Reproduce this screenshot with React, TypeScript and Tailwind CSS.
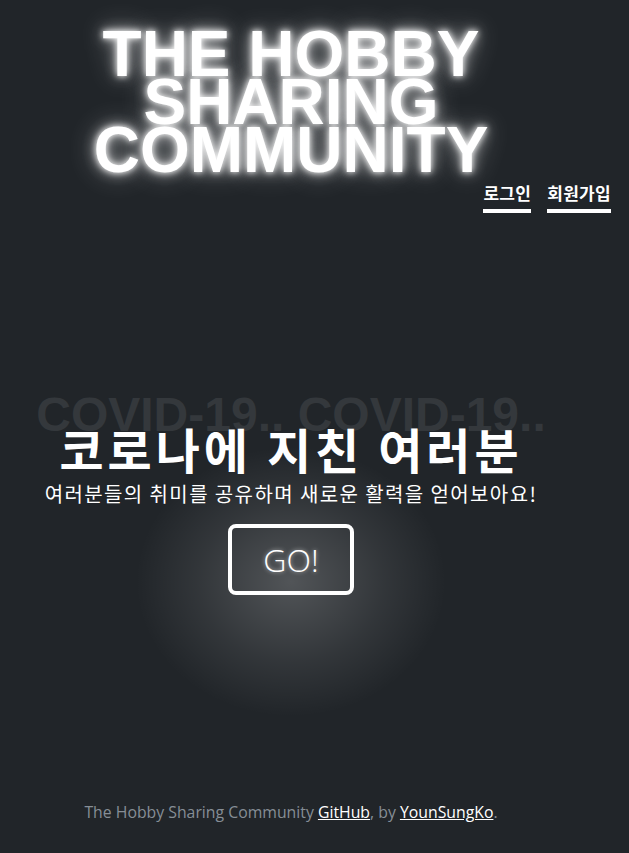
export default function App() {
  return (
    <div className="min-h-screen bg-[#212529] flex flex-col text-white font-['Noto_Sans_CJK_KR',sans-serif]">
      {/* header */}
      <header>
        <div className="w-[582px] mt-[30px]">
          <h1 className="text-center font-['Liberation_Sans',Arial,sans-serif] font-bold text-[64px] leading-[48px] [text-shadow:0_0_6px_#fff,0_0_14px_rgba(255,255,255,0.75),0_0_28px_rgba(255,255,255,0.45)]">
            THE HOBBY
            <br />
            SHARING
            <br />
            COMMUNITY
          </h1>
        </div>
        <nav className="flex justify-end gap-4 pr-[18px] mt-[10px]">
          <a className="text-[17px] font-bold leading-none tracking-[0.3px] pb-2 border-b-4 border-white">로그인</a>
          <a className="text-[17px] font-bold leading-none tracking-[0.3px] pb-2 border-b-4 border-white">회원가입</a>
        </nav>
      </header>

      {/* hero */}
      <main className="w-[582px] flex flex-col items-center mt-[178px]">
        <div className="font-['Liberation_Sans',Arial,sans-serif] font-bold text-[48px] leading-none text-[#34383c] whitespace-nowrap">
          COVID-19.. COVID-19..
        </div>
        <h2 className="relative -mt-[15px] text-[48px] font-bold leading-none tracking-[4px] whitespace-nowrap">
          코로나에 지친 여러분
        </h2>
        <p className="mt-[12px] text-[20px] leading-none tracking-[1.4px] whitespace-nowrap">
          여러분들의 취미를 공유하며 새로운 활력을 얻어보아요!
        </p>
        <div className="relative mt-[20px]">
          <div className="absolute left-1/2 top-1/2 w-[310px] h-[270px] -translate-x-1/2 -translate-y-[42%] bg-[radial-gradient(closest-side,rgba(255,255,255,0.22),rgba(255,255,255,0.08)_60%,rgba(255,255,255,0))]" />
          <button className="relative w-[126px] h-[71px] border-4 border-white rounded-lg font-['Open_Sans',sans-serif] font-light text-[32px] text-white [text-shadow:0_0_4px_rgba(255,255,255,0.6)]">
            GO!
          </button>
        </div>
      </main>

      {/* footer */}
      <footer className="mt-auto w-[582px] pb-[29px] text-center font-['Open_Sans',sans-serif] text-[15.8px] leading-6 text-[#868e96]">
        The Hobby Sharing Community{' '}
        <a className="text-white underline">GitHub</a>, by{' '}
        <a className="text-white underline">YounSungKo</a>.
      </footer>
    </div>
  )
}
